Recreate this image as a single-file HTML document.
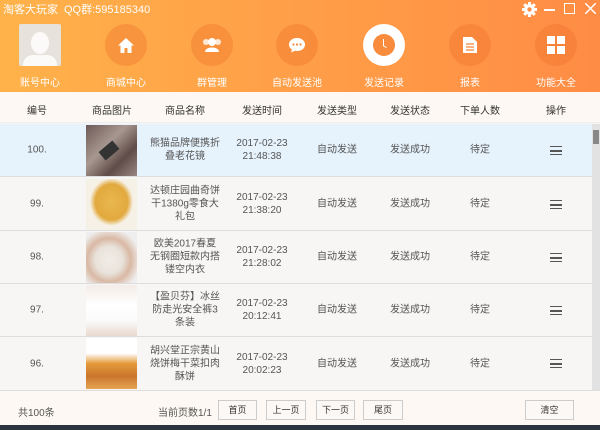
<!DOCTYPE html>
<html><head><meta charset="utf-8"><style>
*{margin:0;padding:0;box-sizing:border-box}
body{width:600px;height:430px;overflow:hidden;font-family:"Liberation Sans","Noto Sans CJK SC",sans-serif;font-size:10px;color:#555;background:#f8f6f4;position:relative}
.hd{position:absolute;left:0;top:0;width:600px;height:92px;background:linear-gradient(90deg,#ffb24a 0%,#ffa048 45%,#ff8c45 100%)}
.t{position:absolute;color:#fff;font-size:11px;top:1px}
.nav{position:absolute;top:24px;width:80px;text-align:center;color:#fff;font-size:10px}
.c{width:42px;height:42px;border-radius:50%;background:rgba(235,110,40,0.35);margin:0 auto;position:relative;display:flex;align-items:center;justify-content:center}
.nav span{display:block;margin-top:8px}
.av{width:42px;height:42px;background:#e8e2dc;margin:0 auto;border-radius:2px;overflow:hidden;position:relative}
.th{position:absolute;top:92px;left:0;width:600px;height:31px;background:#fdf8f3;border-bottom:1px solid #eee}
.th div,.row div.cell{position:absolute;text-align:center;transform:translateX(-50%)}
.th div{top:10px;font-size:10px;color:#333}
.row{position:absolute;left:0;width:592px;height:53px;border-bottom:1px solid #ddd;background:#f8f6f4}
.row div.cell{top:50%;transform:translate(-50%,-50%);line-height:13px}
.img{position:absolute;left:86px;top:1px;width:51px;height:51px}
.menu{width:12px;height:9px;border-top:1.5px solid #555;border-bottom:1.5px solid #555;position:absolute;left:550px;top:22px}
.menu:after{content:"";position:absolute;left:0;top:3px;width:12px;height:1.5px;background:#555}
.ft{position:absolute;top:390px;left:0;width:600px;height:35px;background:#fdf8f3;border-top:1px solid #ddd}
.btn{position:absolute;top:9px;height:20px;border:1px solid #ccc;background:#fbf8f5;text-align:center;line-height:18px;font-size:9px;color:#333}
</style></head><body>
<div class="hd">
<div class="t" style="left:3px">淘客大玩家</div>
<div class="t" style="left:64px">QQ群:595185340</div>
<svg style="position:absolute;left:522px;top:2px" width="15" height="15" viewBox="0 0 15 15"><g fill="#fff"><circle cx="7.5" cy="7.5" r="5.3"/><rect x="6" y="0" width="3" height="15"/><rect x="0" y="6" width="15" height="3"/><rect x="6" y="0" width="3" height="15" transform="rotate(45 7.5 7.5)"/><rect x="6" y="0" width="3" height="15" transform="rotate(-45 7.5 7.5)"/></g><circle cx="7.5" cy="7.5" r="2.2" fill="#ff8f45"/></svg>
<div style="position:absolute;left:544px;top:9px;width:11px;height:1.5px;background:#fff"></div>
<div style="position:absolute;left:564px;top:3px;width:11px;height:11px;border:1.5px solid #fff"></div>
<svg style="position:absolute;left:585px;top:3px" width="11" height="11"><path d="M0 0L11 11M11 0L0 11" stroke="#fff" stroke-width="1.5"/></svg>
<div class="nav" style="left:0"><div class="av"><div style="position:absolute;left:12px;top:8px;width:18px;height:22px;border-radius:50%;background:#fbfaf8"></div><div style="position:absolute;left:4px;top:31px;width:34px;height:14px;border-radius:10px 10px 0 0;background:#fbfaf8"></div></div><span>账号中心</span></div>
<div class="nav" style="left:86px"><div class="c"><svg width="18" height="17"><path d="M9 1L1 8.5H3.5V16H7.5V11H10.5V16H14.5V8.5H17Z" fill="#fff"/></svg></div><span>商城中心</span></div>
<div class="nav" style="left:172px"><div class="c"><svg width="20" height="16"><circle cx="10" cy="5" r="4" fill="#fff"/><path d="M3 15C3 9 17 9 17 15Z" fill="#fff"/><circle cx="4" cy="5" r="3" fill="#fff" opacity=".8"/><circle cx="16" cy="5" r="3" fill="#fff" opacity=".8"/></svg></div><span>群管理</span></div>
<div class="nav" style="left:257px"><div class="c"><svg width="18" height="16"><path d="M9 1C4 1 1 4 1 7.5C1 10 2.5 11.5 4 12.5L3 15.5L7 13.8C7.6 13.9 8.3 14 9 14C14 14 17 11 17 7.5C17 4 14 1 9 1Z" fill="#fff"/><circle cx="5.5" cy="7.5" r="1.1" fill="#f88a3c"/><circle cx="9" cy="7.5" r="1.1" fill="#f88a3c"/><circle cx="12.5" cy="7.5" r="1.1" fill="#f88a3c"/></svg></div><span>自动发送池</span></div>
<div class="nav" style="left:344px"><div class="c" style="background:#fff"><div style="width:22px;height:22px;border-radius:50%;background:#f98c3c;position:relative"><div style="position:absolute;left:10px;top:5px;width:1.3px;height:7px;background:#fff"></div><div style="position:absolute;left:10px;top:11px;width:4px;height:1.3px;background:#fff;transform:rotate(30deg);transform-origin:left"></div></div></div><span>发送记录</span></div>
<div class="nav" style="left:430px"><div class="c"><svg width="16" height="18"><path d="M1 1H10L15 6V17H1Z" fill="#fff"/><g stroke="#f88a3c" stroke-width="1.3"><line x1="4" y1="8" x2="12" y2="8"/><line x1="4" y1="11" x2="12" y2="11"/><line x1="4" y1="14" x2="12" y2="14"/></g></svg></div><span>报表</span></div>
<div class="nav" style="left:516px"><div class="c"><svg width="18" height="18" fill="#fff"><rect x="0" y="0" width="8" height="8"/><rect x="10" y="0" width="8" height="8"/><rect x="0" y="10" width="8" height="8"/><rect x="10" y="10" width="8" height="8"/></svg></div><span>功能大全</span></div>
</div>
<div class="th"><div style="left:37px">编号</div><div style="left:112px">商品图片</div><div style="left:185px">商品名称</div><div style="left:262px">发送时间</div><div style="left:337px">发送类型</div><div style="left:410px">发送状态</div><div style="left:480px">下单人数</div><div style="left:556px">操作</div></div>

<div class="row" style="top:124px;background:#e6f3fd"><div class="cell" style="left:37px">100.</div><div class="img" style="background:linear-gradient(135deg,#6e5a57,#a89790 40%,#5f4c48 70%,#9a8883)"><div style="position:absolute;left:14px;top:20px;width:18px;height:11px;background:#333;transform:rotate(-40deg)"></div></div><div class="cell" style="left:185px;width:72px">熊猫品牌便携折叠老花镜</div><div class="cell" style="left:262px">2017-02-23<br>21:48:38</div><div class="cell" style="left:337px">自动发送</div><div class="cell" style="left:410px">发送成功</div><div class="cell" style="left:480px">待定</div><div class="menu"></div></div>

<div class="row" style="top:178px"><div class="cell" style="left:37px">99.</div><div class="img" style="background:radial-gradient(ellipse at 50% 45%,#e9b84f 0%,#e2a93e 45%,#f6f1e6 60%)"></div><div class="cell" style="left:185px;width:72px">达顿庄园曲奇饼干1380g零食大礼包</div><div class="cell" style="left:262px">2017-02-23<br>21:38:20</div><div class="cell" style="left:337px">自动发送</div><div class="cell" style="left:410px">发送成功</div><div class="cell" style="left:480px">待定</div><div class="menu"></div></div>

<div class="row" style="top:231px"><div class="cell" style="left:37px">98.</div><div class="img" style="background:radial-gradient(ellipse at 45% 55%,#f1ede6 0%,#e8e2da 35%,#d9b8a4 55%,#eee 80%)"></div><div class="cell" style="left:185px;width:72px">欧美2017春夏无钢圈短款内搭镂空内衣</div><div class="cell" style="left:262px">2017-02-23<br>21:28:02</div><div class="cell" style="left:337px">自动发送</div><div class="cell" style="left:410px">发送成功</div><div class="cell" style="left:480px">待定</div><div class="menu"></div></div>

<div class="row" style="top:284px"><div class="cell" style="left:37px">97.</div><div class="img" style="background:linear-gradient(#f4ece8 0%,#fff 40%,#fafafa 70%,#e9d8cc 100%)"></div><div class="cell" style="left:185px;width:72px">【盈贝芬】冰丝防走光安全裤3条装</div><div class="cell" style="left:262px">2017-02-23<br>20:12:41</div><div class="cell" style="left:337px">自动发送</div><div class="cell" style="left:410px">发送成功</div><div class="cell" style="left:480px">待定</div><div class="menu"></div></div>

<div class="row" style="top:337px;border-bottom:none"><div class="cell" style="left:37px">96.</div><div class="img" style="background:linear-gradient(#fff 0%,#fff 30%,#e59a3a 50%,#c9762c 75%,#e6a452 100%)"></div><div class="cell" style="left:185px;width:72px">胡兴堂正宗黄山烧饼梅干菜扣肉酥饼</div><div class="cell" style="left:262px">2017-02-23<br>20:02:23</div><div class="cell" style="left:337px">自动发送</div><div class="cell" style="left:410px">发送成功</div><div class="cell" style="left:480px">待定</div><div class="menu"></div></div>

<div style="position:absolute;left:592px;top:124px;width:8px;height:266px;background:#e2e2e2"></div>
<div style="position:absolute;left:593px;top:130px;width:6px;height:14px;background:#888"></div>

<div class="ft">
<div style="position:absolute;left:18px;top:13px">共100条</div>
<div style="position:absolute;left:158px;top:13px">当前页数1/1</div>
<div class="btn" style="left:218px;width:39px">首页</div>
<div class="btn" style="left:266px;width:40px">上一页</div>
<div class="btn" style="left:316px;width:39px">下一页</div>
<div class="btn" style="left:363px;width:40px">尾页</div>
<div class="btn" style="left:525px;width:49px">清空</div>
</div>
<div style="position:absolute;left:0;top:425px;width:600px;height:5px;background:#2c3440"></div>
</body></html>
